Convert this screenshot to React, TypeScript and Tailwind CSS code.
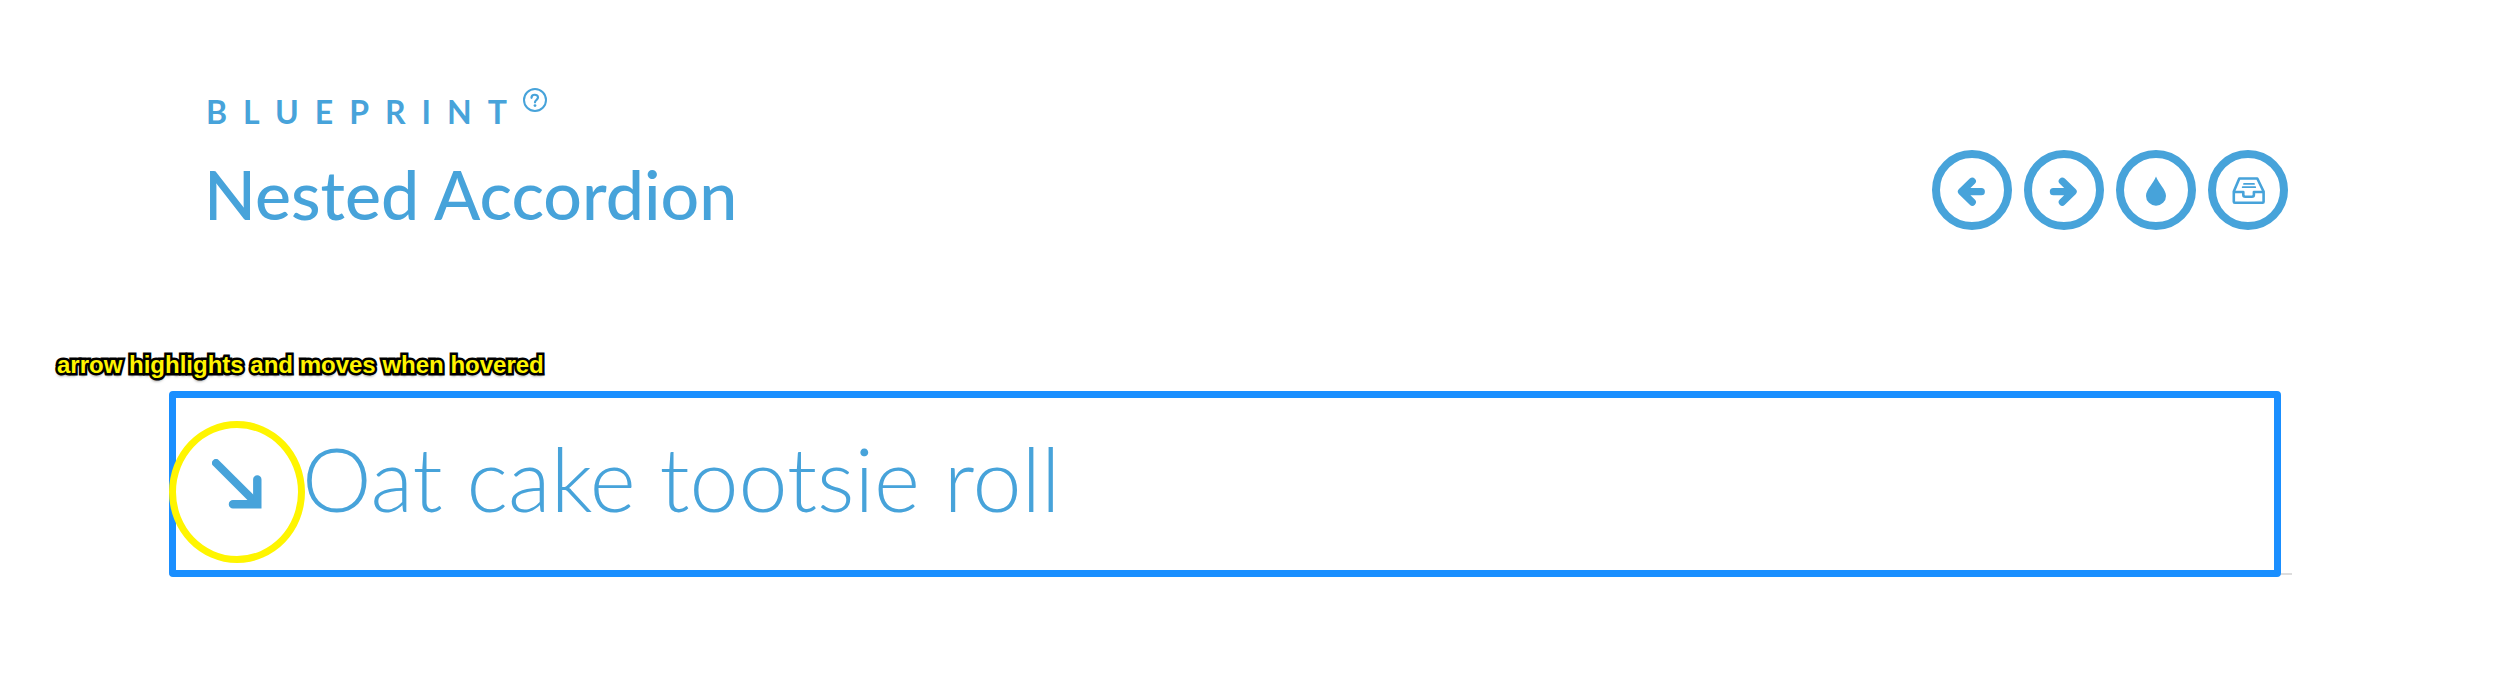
import React from "react";

const navButton =
  "block size-20 rounded-full border-8 border-[#47a3da] text-[#47a3da] hover:bg-[#47a3da] hover:text-white";

function ArrowLeft() {
  return (
    <svg viewBox="8 8 64 64" className="size-16" aria-hidden="true">
      <path d="M40.300 31.200 29.500 41.700l10.800 10.500M31 41.700H49.300" fill="none" stroke="currentColor" strokeWidth="7.200" strokeLinecap="round" strokeLinejoin="round" />
    </svg>
  );
}

function ArrowRight() {
  return (
    <svg viewBox="8 8 64 64" className="size-16" aria-hidden="true">
      <path d="M38.300 31.200 49.100 41.700 38.300 52.200M47.600 41.700H29.400" fill="none" stroke="currentColor" strokeWidth="7.200" strokeLinecap="round" strokeLinejoin="round" />
    </svg>
  );
}

function Drop() {
  return (
    <svg viewBox="8 8 64 64" className="size-16" aria-hidden="true">
      <path d="M40 26.500C37.500 33.500 30 39.500 30 46a10 9.700 0 0 0 20 0C50 39.500 42.500 33.500 40 26.500z" fill="currentColor" />
    </svg>
  );
}

function Archive() {
  return (
    <svg viewBox="8 8 64 64" className="size-16" aria-hidden="true">
      <g fill="none" stroke="currentColor" strokeWidth="2.600" strokeLinejoin="round" strokeLinecap="round">
        <path d="M25.800 41.500 31.300 28.500H49.300L55.600 41.500V51.700a1 1 0 0 1-1 1H26.800a1 1 0 0 1-1-1zM26 42h9.300v2.700a2 2 0 0 0 2 2h6.600a2 2 0 0 0 2-2V42H55.400" />
        <path d="M36 33.900H46M34.700 37.200H47.200" strokeWidth="1.800" />
      </g>
    </svg>
  );
}

const links = [
  { label: "Previous Blueprint", Icon: ArrowLeft },
  { label: "Next Blueprint", Icon: ArrowRight },
  { label: "Back to the article", Icon: Drop },
  { label: "Blueprints archive", Icon: Archive },
];

export default function App() {
  return (
    <div className="bg-white pt-20 pb-30 font-['Lato',sans-serif] text-[#47a3da]">
      <header className="mr-52 ml-51 flex items-end justify-between">
        <div>
          <div className="flex items-start">
            <span className="pt-2 pl-[2px] text-[32px] leading-12 font-bold tracking-[0.5em] uppercase">Blueprint</span>
            <a href="#about" aria-label="About Blueprints" className="mt-2 block">
              <svg viewBox="0 0 24 24" className="size-6" fill="none" stroke="currentColor" strokeLinecap="round" aria-hidden="true">
                <circle cx="12" cy="12" r="11" strokeWidth="2" />
                <path d="M8.500 9.800C8.500 5.800 15 5.800 15 9.600C15 11.800 12 11.800 12 14.300" strokeWidth="2.200" />
                <circle cx="12" cy="17.600" r="1.400" fill="currentColor" stroke="none" />
              </svg>
            </a>
          </div>
          <h1 className="pt-[18px] text-[68px] leading-20 font-medium">Nested Accordion</h1>
        </div>
        <nav aria-label="Blueprints" className="flex gap-3 pb-1">
          {links.map(({ label, Icon }) => (
            <a key={label} href="#" aria-label={label} className={navButton}>
              <Icon />
            </a>
          ))}
        </nav>
      </header>

      <p className="pt-[115px] pl-[57px] font-['Liberation_Sans',sans-serif] text-2xl leading-8 font-bold text-[#fff500] [-webkit-text-stroke:5px_black] [paint-order:stroke_fill] [text-shadow:0_3px_3px_rgba(0,0,0,0.5)]">
        arrow highlights and moves when hovered
      </p>

      <main className="mr-51 ml-[169px]">
        <div className="relative mt-[10px] border-b-2 border-[#ddd]">
          <h2 className="mr-[11px] -mb-1 rounded border-7 border-[#1a8fff]">
            <button type="button" aria-expanded="false" className="flex w-full items-start gap-10 pt-[34px] pr-8 pb-[46px] pl-9 text-left text-[88px] leading-23 font-light">
              <svg viewBox="0 0 50 50" className="mt-[27px] size-[50px]" aria-hidden="true">
                <path d="M4 4 44 44" stroke="currentColor" strokeWidth="8" strokeLinecap="round" />
                <path d="M49.500 49.500V20.500a4.200 4.200 0 0 0-8.400 0V41H21a4.200 4.200 0 0 0 0 8.500z" fill="currentColor" />
              </svg>
              Oat cake tootsie roll
            </button>
          </h2>
          <div className="pointer-events-none absolute top-[30px] left-0 h-[142px] w-[136px] rounded-[50%] border-7 border-[#fff500]" />
        </div>
      </main>
    </div>
  );
}
